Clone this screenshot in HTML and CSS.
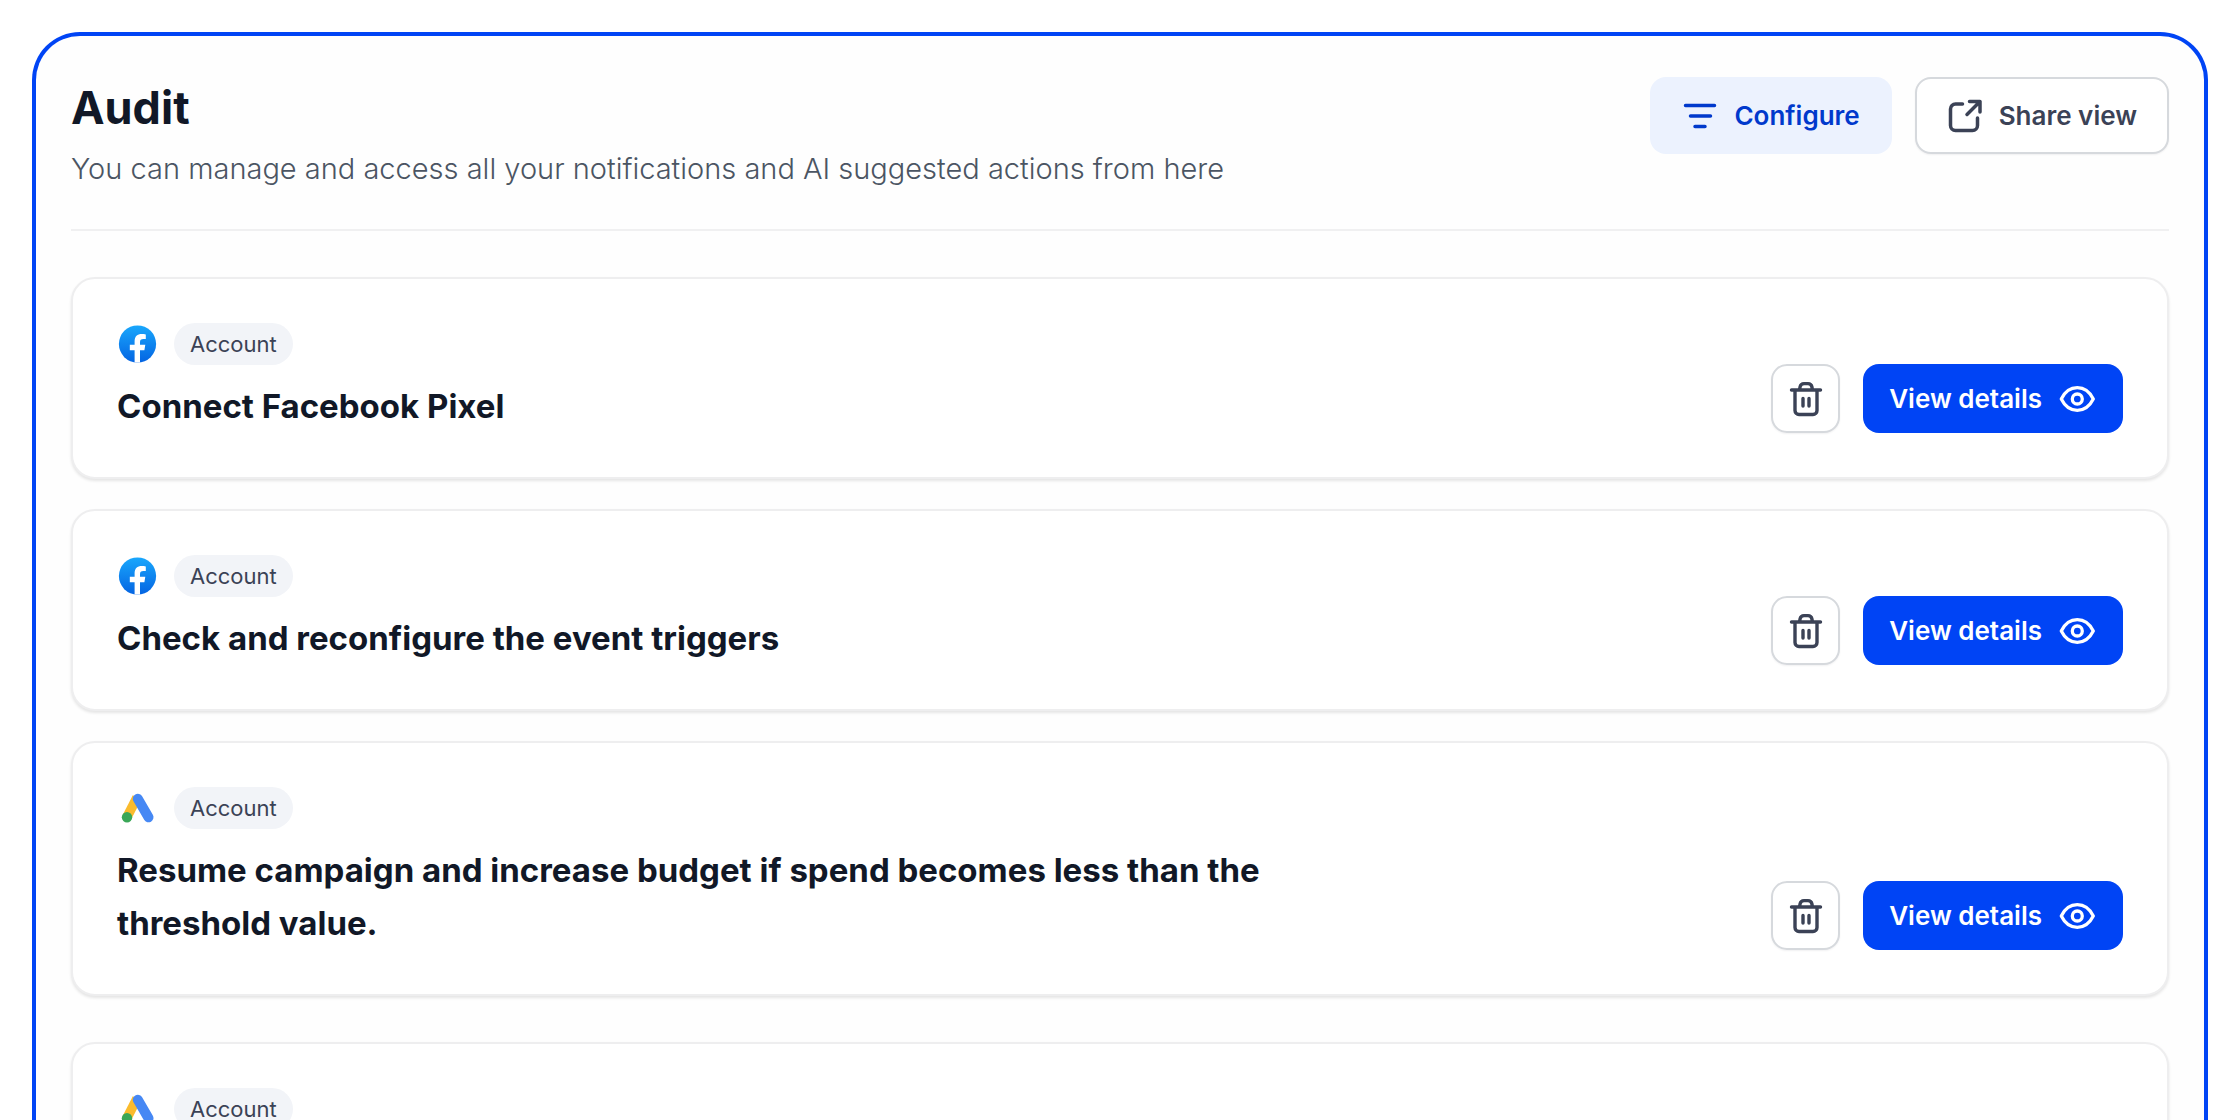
FILE: index.html
```html
<!DOCTYPE html>
<html lang="en">
<head>
<meta charset="utf-8">
<meta name="viewport" content="width=device-width, initial-scale=1">
<title>Audit</title>
<link rel="stylesheet" href="styles.css">
</head>
<body>
<svg class="sprite" aria-hidden="true">
  <defs>
    <linearGradient id="fb-blue" x1="0" y1="0" x2="0" y2="1">
      <stop offset="0" stop-color="#19a7fc"/>
      <stop offset="1" stop-color="#0464e2"/>
    </linearGradient>
    <clipPath id="fb-circle"><circle cx="20.500" cy="20" r="18.600"/></clipPath>
  </defs>
  <symbol id="facebook" viewBox="0 0 40 40">
    <circle cx="20.500" cy="20" r="18.600" fill="url(#fb-blue)"/>
    <path clip-path="url(#fb-circle)" fill="#fff" d="M17.600 40V26.200h-4.800v-5.400h4.800v-3.200c0-5.300 2.700-7.600 7.200-7.600 1.300 0 2.700.1 4 .4v4.700h-2.300c-2.600 0-3.500 1.100-3.500 2.900v2.800h5.300l-.9 5.400h-4.400V40z"/>
  </symbol>
  <symbol id="google-ads" viewBox="0 0 40 40">
    <path d="M20 9.500L10 29" stroke="#fabb2d" stroke-width="9.500" fill="none"/>
    <path d="M20.800 10.800L31.500 29.300" stroke="#4688f4" stroke-width="10" stroke-linecap="round" fill="none"/>
    <circle cx="10" cy="29.200" r="5.200" fill="#3aa757"/>
  </symbol>
  <symbol id="trash" viewBox="0 0 40 40">
    <g fill="none" stroke="currentColor" stroke-width="3.400" stroke-linecap="round" stroke-linejoin="round">
      <path d="M5.500 11h29M9 11v20.500a4 4 0 0 0 4 4h14a4 4 0 0 0 4-4V11M13.500 11l.6-3.200A4 4 0 0 1 18 4.600h4a4 4 0 0 1 3.900 3.200l.6 3.200M17 19.500v7.500M23 19.500v7.500"/>
    </g>
  </symbol>
  <symbol id="eye" viewBox="0 0 40 40">
    <g fill="none" stroke="currentColor" stroke-width="3.300" stroke-linejoin="round">
      <path d="M4.300 20C8 12.500 13.500 8.700 20.300 8.700S32.500 12.500 36.300 20C32.500 27.500 27 31.300 20.300 31.300S8 27.500 4.300 20z"/>
      <circle cx="20.300" cy="20" r="5"/>
    </g>
  </symbol>
</svg>

<main class="panel">
  <header class="panel-header">
    <div>
      <h1 class="panel-title">Audit</h1>
      <p class="panel-subtitle">You can manage and access all your notifications and AI suggested actions from here</p>
    </div>
    <div class="header-actions">
      <button class="btn btn-soft" type="button">
        <svg class="icon" viewBox="0 0 36 36" fill="none" stroke="currentColor" stroke-width="3.500" stroke-linecap="round"><path d="M3.500 7.500h29M8.500 18h20M13 28.500h10"/></svg>
        Configure
      </button>
      <button class="btn btn-outline" type="button">
        <svg class="icon" viewBox="0 0 36 36" fill="none" stroke="currentColor" stroke-width="3.500" stroke-linecap="round" stroke-linejoin="round"><path d="M15.500 6H8.500a5 5 0 0 0-5 5v16.500a5 5 0 0 0 5 5h17a5 5 0 0 0 5-5v-7.500M20 16.500L33 3.500M22.500 3.500H33V14"/></svg>
        Share view
      </button>
    </div>
  </header>

  <section class="card-group">
    <article class="card">
      <div class="card-body">
        <div class="card-meta"><svg class="brand" role="img" aria-label="Facebook"><use href="#facebook"/></svg><span class="tag">Account</span></div>
        <h2 class="card-title">Connect Facebook Pixel</h2>
      </div>
      <div class="card-actions">
        <button class="btn-icon" type="button" aria-label="Delete"><svg class="icon-md"><use href="#trash"/></svg></button>
        <button class="btn-primary" type="button">View details <svg class="icon-md"><use href="#eye"/></svg></button>
      </div>
    </article>
    <article class="card">
      <div class="card-body">
        <div class="card-meta"><svg class="brand" role="img" aria-label="Facebook"><use href="#facebook"/></svg><span class="tag">Account</span></div>
        <h2 class="card-title">Check and reconfigure the event triggers</h2>
      </div>
      <div class="card-actions">
        <button class="btn-icon" type="button" aria-label="Delete"><svg class="icon-md"><use href="#trash"/></svg></button>
        <button class="btn-primary" type="button">View details <svg class="icon-md"><use href="#eye"/></svg></button>
      </div>
    </article>
    <article class="card">
      <div class="card-body">
        <div class="card-meta"><svg class="brand" role="img" aria-label="Google Ads"><use href="#google-ads"/></svg><span class="tag">Account</span></div>
        <h2 class="card-title">Resume campaign and increase budget if spend becomes less than the threshold value.</h2>
      </div>
      <div class="card-actions">
        <button class="btn-icon" type="button" aria-label="Delete"><svg class="icon-md"><use href="#trash"/></svg></button>
        <button class="btn-primary" type="button">View details <svg class="icon-md"><use href="#eye"/></svg></button>
      </div>
    </article>
  </section>

  <section class="card-group">
    <article class="card">
      <div class="card-body">
        <div class="card-meta"><svg class="brand" role="img" aria-label="Google Ads"><use href="#google-ads"/></svg><span class="tag">Account</span></div>
      </div>
    </article>
  </section>
</main>
</body>
</html>
```
FILE: styles.css
```css
* {
  box-sizing: border-box;
}

body {
  margin: 0;
  height: 100vh;
  overflow: hidden;
  padding: 32px 32px 0;
  background: #ffffff;
  color: #111827;
  font-family: Inter, "Liberation Sans", sans-serif;
}

h1, h2, p {
  margin: 0;
}

button {
  font: inherit;
  cursor: pointer;
}

svg {
  display: block;
  flex: none;
}

.sprite {
  position: absolute;
  width: 0;
  height: 0;
}

.panel {
  display: flex;
  flex-direction: column;
  gap: 46px;
  padding: 41px 35px 48px;
  border: 4px solid #0044f5;
  border-bottom: 0;
  border-radius: 48px 48px 0 0;
  background: #fefefe;
}

.panel-header {
  display: flex;
  justify-content: space-between;
  align-items: flex-start;
  padding-bottom: 37px;
  border-bottom: 2px solid #f0f0f1;
}

.panel-title {
  padding-top: 3px;
  font-size: 45px;
  line-height: 56px;
  font-weight: 700;
}

.panel-subtitle {
  padding-top: 10px;
  font-size: 29px;
  line-height: 46px;
  font-weight: 300;
  color: #4b5563;
}

.header-actions {
  display: flex;
  gap: 23px;
}

.btn {
  display: flex;
  align-items: center;
  gap: 16px;
  height: 77px;
  padding: 0 30px;
  border: 2px solid transparent;
  border-radius: 16px;
  font-size: 26px;
  font-weight: 600;
  white-space: nowrap;
}

.btn-soft {
  background: #ecf2fe;
  color: #0039cc;
}

.btn-outline {
  background: #ffffff;
  border-color: #d6d9dd;
  color: #3b4256;
  box-shadow: 0 1px 2px rgba(16, 24, 40, 0.06);
}

.icon {
  width: 36px;
  height: 36px;
}

.card-group {
  display: flex;
  flex-direction: column;
  gap: 30px;
}

.card {
  display: flex;
  justify-content: space-between;
  align-items: flex-end;
  gap: 48px;
  padding: 44px;
  border: 2px solid #eeeeef;
  border-radius: 24px;
  background: #ffffff;
  box-shadow: 0 2px 3px rgba(0, 0, 0, 0.1);
}

.card-body {
  display: flex;
  flex-direction: column;
  gap: 15px;
  max-width: 1200px;
}

.card-meta {
  display: flex;
  align-items: center;
  gap: 17px;
}

.brand {
  width: 40px;
  height: 40px;
}

.tag {
  padding: 0 16px;
  border-radius: 21px;
  background: #f2f4f8;
  color: #3b4256;
  font-size: 22px;
  line-height: 42px;
}

.card-title {
  font-size: 33px;
  line-height: 53px;
  font-weight: 700;
}

.card-actions {
  display: flex;
  gap: 23px;
}

.btn-icon,
.btn-primary {
  display: flex;
  align-items: center;
  justify-content: center;
  height: 69px;
  border-radius: 16px;
}

.btn-icon {
  width: 69px;
  padding: 0;
  border: 2px solid #d6d9dd;
  background: #ffffff;
  color: #3b4256;
  box-shadow: 0 1px 2px rgba(16, 24, 40, 0.06);
}

.btn-primary {
  gap: 15px;
  padding: 0 26px;
  border: 0;
  background: #0044f5;
  color: #ffffff;
  font-size: 26px;
  font-weight: 600;
  white-space: nowrap;
}

.icon-md {
  width: 40px;
  height: 40px;
}
```
